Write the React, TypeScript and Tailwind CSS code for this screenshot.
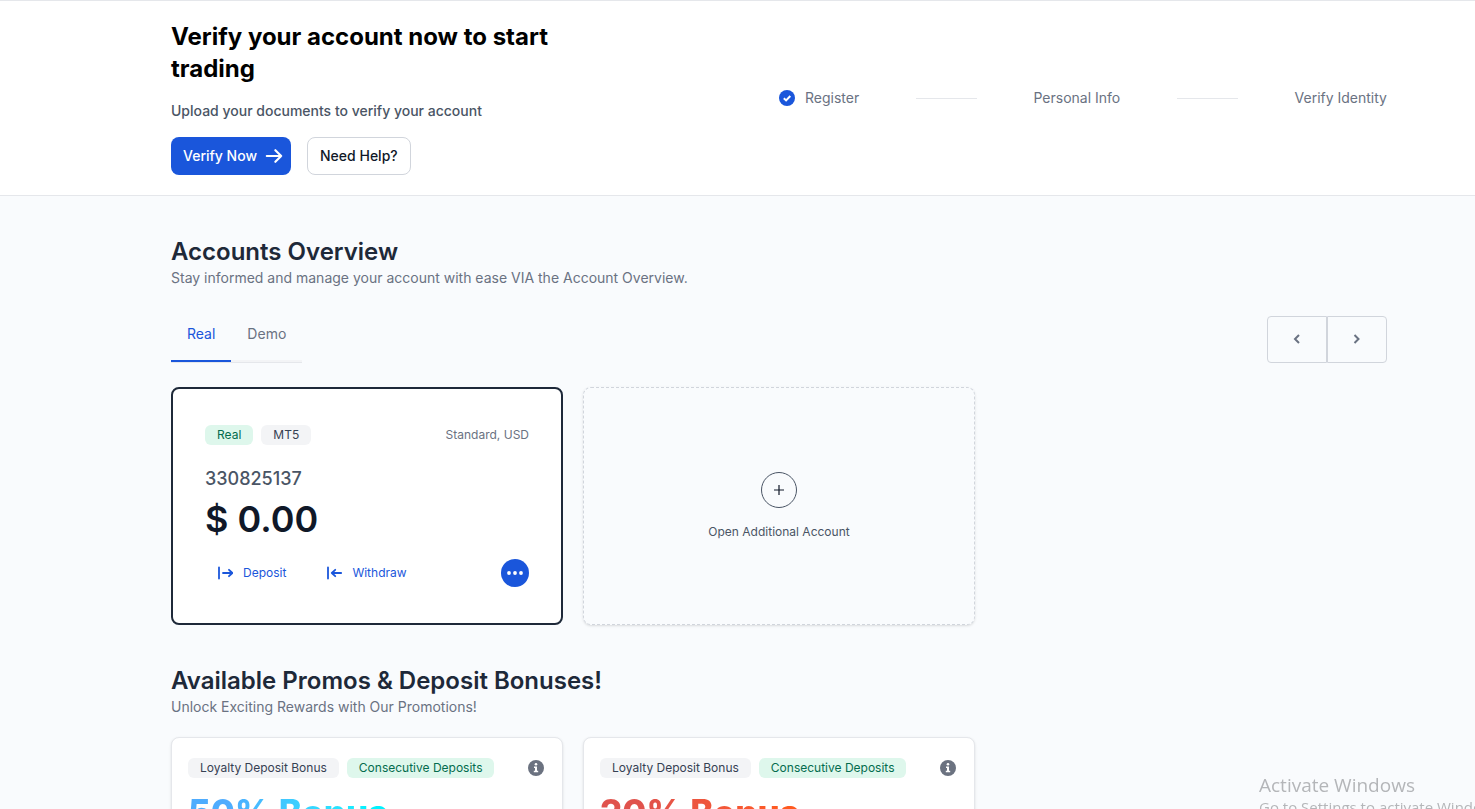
import { useState } from "react";

const promos = [
  { title: "50% Bonus", gradient: "from-[#4facfe] to-[#00f2fe]" },
  { title: "20% Bonus", gradient: "from-[#e0524c] to-[#ff5a1f]" },
];

function Tag({ text, green }: { text: string; green?: boolean }) {
  return (
    <span
      className={`rounded-md px-3 text-xs leading-5 ${
        green ? "bg-[#def7ec] text-[#046c4e]" : "bg-gray-100 text-gray-700"
      }`}
    >
      {text}
    </span>
  );
}

function Steps() {
  return (
    <ol className="flex items-center justify-between text-sm text-gray-500">
      <li className="flex items-center gap-2.5">
        <svg className="h-4 w-4" viewBox="0 0 16 16" fill="none">
          <circle cx="8" cy="8" r="8" fill="#1a56db" />
          <path d="M4.8 8.2l2.3 2.2 4.2-4.4" stroke="#fff" strokeWidth="2" />
        </svg>
        Register
      </li>
      <li aria-hidden="true" className="h-px w-[61px] bg-gray-200" />
      <li>Personal Info</li>
      <li aria-hidden="true" className="h-px w-[61px] bg-gray-200" />
      <li>Verify Identity</li>
    </ol>
  );
}

function SectionTitle({ title, text }: { title: string; text: string }) {
  return (
    <>
      <h2 className="text-2xl font-semibold text-gray-800">{title}</h2>
      <p className="text-sm text-gray-500">{text}</p>
    </>
  );
}

function AccountCard() {
  return (
    <div className="rounded-lg border-2 border-gray-800 bg-white p-8">
      <div className="flex h-7 items-center justify-between">
        <div className="flex gap-2">
          <Tag text="Real" green />
          <Tag text="MT5" />
        </div>
        <span className="text-xs leading-5 text-gray-500">Standard, USD</span>
      </div>
      <div className="mt-4 text-lg leading-7 font-medium text-gray-600">330825137</div>
      <div className="mt-1.5 text-4xl leading-10 font-semibold text-gray-900">$ 0.00</div>
      <div className="mt-4 flex h-9 items-center text-xs text-[#1a56db]">
        <button className="flex items-center gap-2.5 px-3">
          <svg className="h-4 w-4" viewBox="0 0 16 16" fill="none" stroke="currentColor" strokeWidth="1.8" strokeLinecap="round" strokeLinejoin="round">
            <path d="M2 2.4v11.2M6 8h9.4M12 4.8L15.4 8 12 11.2" />
          </svg>
          Deposit
        </button>
        <button className="ml-4 flex items-center gap-2.5 px-3">
          <svg className="h-4 w-4" viewBox="0 0 16 16" fill="none" stroke="currentColor" strokeWidth="1.8" strokeLinecap="round" strokeLinejoin="round">
            <path d="M2 2.4v11.2M15.2 8H6M9.2 4.8L5.8 8l3.4 3.2" />
          </svg>
          Withdraw
        </button>
        <button
          aria-label="More actions"
          className="ml-auto flex h-7 w-7 items-center justify-center rounded-full bg-[#1a56db] text-white"
        >
          <svg className="h-4 w-4" viewBox="0 0 16 16" fill="currentColor">
            <circle cx="2" cy="8" r="1.9" />
            <circle cx="8" cy="8" r="1.9" />
            <circle cx="14" cy="8" r="1.9" />
          </svg>
        </button>
      </div>
    </div>
  );
}

function PromoCard({ title, gradient }: { title: string; gradient: string }) {
  return (
    <div className="rounded-lg border border-gray-200 bg-white p-4 shadow-sm">
      <div className="flex h-7 items-center gap-2">
        <Tag text="Loyalty Deposit Bonus" />
        <Tag text="Consecutive Deposits" green />
        <button aria-label="Promo details" className="ml-auto px-0.5">
          <svg className="h-4 w-4" viewBox="0 0 16 16">
            <circle cx="8" cy="8" r="8" fill="#6b7280" />
            <path d="M6 6.4h3v4.4h1.2v1.5H5.8v-1.5H7V8H6z" fill="#fff" />
            <circle cx="8" cy="4.2" r="1.3" fill="#fff" />
          </svg>
        </button>
      </div>
      <div className="mt-2.5 flex">
        <h3
          className={`bg-linear-to-r from-20% to-90% bg-clip-text text-[35px] leading-10 font-extrabold text-transparent ${gradient}`}
        >
          {title}
        </h3>
      </div>
    </div>
  );
}

export default function App() {
  const [tab, setTab] = useState("Real");

  return (
    <div className="h-screen overflow-hidden bg-[#f9fbfd] font-[Inter,sans-serif]">
      <header className="border-y border-gray-200 bg-white pl-[83px]">
        <div className="mx-auto grid max-w-7xl grid-cols-2 items-center px-8 py-5">
          <div>
            <h1 className="max-w-md text-2xl font-bold text-black">Verify your account now to start trading</h1>
            <p className="mt-4 text-sm font-medium text-gray-600">Upload your documents to verify your account</p>
            <div className="mt-4 flex gap-4 text-sm font-medium">
              <button className="flex h-[38px] items-center gap-2 rounded-lg bg-[#1a56db] pr-2 pl-3 text-white">
                Verify Now
                <svg className="h-[18px] w-[18px]" viewBox="0 0 20 20" fill="none" stroke="currentColor" strokeWidth="2.4" strokeLinecap="round" strokeLinejoin="round">
                  <path d="M2 10h16M11.5 3.6l6.5 6.4-6.5 6.4" />
                </svg>
              </button>
              <button className="h-[38px] rounded-lg border border-gray-300 bg-white px-3 text-gray-900">
                Need Help?
              </button>
            </div>
          </div>
          <Steps />
        </div>
      </header>

      <main className="pl-[83px]">
        <div className="mx-auto max-w-7xl px-8">
          <section className="pt-10">
            <SectionTitle
              title="Accounts Overview"
              text="Stay informed and manage your account with ease VIA the Account Overview."
            />
            <div className="mt-5 flex items-end justify-between">
              <div role="tablist" className="flex border-b border-gray-200 text-sm">
                {["Real", "Demo"].map((name) => (
                  <button
                    key={name}
                    role="tab"
                    aria-selected={tab === name}
                    onClick={() => setTab(name)}
                    className={`border-b-2 p-4 ${
                      tab === name ? "border-[#1a56db] text-[#1a56db]" : "border-gray-100 text-gray-500"
                    }`}
                  >
                    {name}
                  </button>
                ))}
              </div>
              <div className="flex text-gray-500">
                <button aria-label="Previous" className="flex h-[47px] w-[60px] items-center justify-center rounded-l-sm border border-gray-300">
                  <svg className="h-3 w-3" viewBox="0 0 12 12" fill="none" stroke="currentColor" strokeWidth="2">
                    <path d="M8 1L4 5l4 4" />
                  </svg>
                </button>
                <button aria-label="Next" className="flex h-[47px] w-[60px] items-center justify-center rounded-r-sm border border-gray-300">
                  <svg className="h-3 w-3" viewBox="0 0 12 12" fill="none" stroke="currentColor" strokeWidth="2">
                    <path d="M3.5 1l4 4-4 4" />
                  </svg>
                </button>
              </div>
            </div>
            <div className="mt-6 grid grid-cols-3 gap-5">
              <AccountCard />
              <button className="flex flex-col items-center justify-center rounded-lg border border-dashed border-gray-300 text-xs text-gray-600 shadow-sm">
                <span className="mb-4 flex h-9 w-9 items-center justify-center rounded-full border border-gray-600 text-gray-900">
                  <svg className="h-3 w-3" viewBox="0 0 12 12" stroke="currentColor" strokeWidth="1.2">
                    <path d="M6 1v10M1 6h10" />
                  </svg>
                </span>
                Open Additional Account
              </button>
            </div>
          </section>

          <section className="pt-10">
            <SectionTitle
              title="Available Promos & Deposit Bonuses!"
              text="Unlock Exciting Rewards with Our Promotions!"
            />
            <div className="mt-5 grid grid-cols-3 gap-5">
              {promos.map((p) => (
                <PromoCard key={p.title} {...p} />
              ))}
            </div>
          </section>
        </div>
      </main>

      {/* OS activation notice, sits above everything and runs off the corner */}
      <div className="pointer-events-none fixed top-[773px] left-[1259px] whitespace-nowrap font-['Open_Sans',sans-serif] text-[#b4b6b9]">
        <p className="text-[19px] leading-6">Activate Windows</p>
        <p className="text-[15px] leading-5">Go to Settings to activate Windows.</p>
      </div>
    </div>
  );
}
